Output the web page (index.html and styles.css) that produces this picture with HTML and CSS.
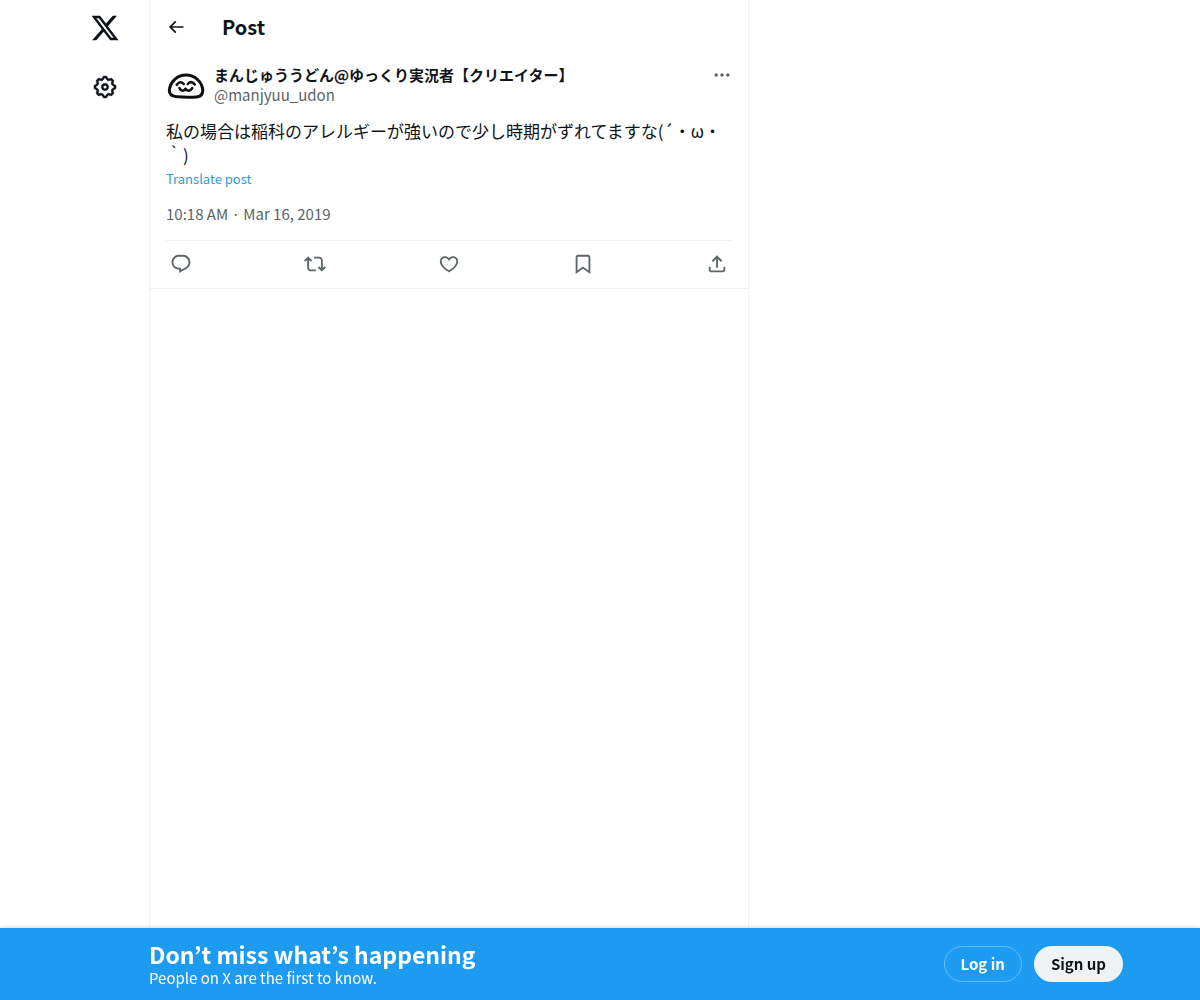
FILE: index.html
```html
<!DOCTYPE html>
<html lang="en">
<head>
<meta charset="utf-8">
<meta name="viewport" content="width=device-width, initial-scale=1">
<title>Post / X</title>
<link rel="stylesheet" href="styles.css">
</head>
<body>
<div class="page">
  <nav class="sidebar" aria-label="Primary">
    <a class="nav-link" href="#" aria-label="X"><svg class="logo" viewBox="0 0 24 24"><path d="M18.244 2.25h3.308l-7.227 8.26 8.502 11.24H16.17l-5.214-6.817L4.99 21.75H1.68l7.73-8.835L1.254 2.25H8.08l4.713 6.231zm-1.161 17.52h1.833L7.084 4.126H5.117z"/></svg></a>
    <a class="nav-link" href="#" aria-label="Settings"><svg class="gear" viewBox="0 0 24 24"><path d="M10.54 1.75h2.92l1.57 2.36c.11.17.32.25.53.21l2.53-.59 2.17 2.17-.58 2.54c-.05.2.04.41.21.53l2.36 1.57v2.92l-2.36 1.57c-.17.12-.26.33-.21.53l.58 2.54-2.17 2.17-2.53-.59c-.21-.04-.42.04-.53.21l-1.57 2.36h-2.92l-1.58-2.36c-.11-.17-.32-.25-.52-.21l-2.54.59-2.17-2.17.58-2.54c.05-.2-.03-.41-.21-.53l-2.35-1.57v-2.92L4.1 8.97c.18-.12.26-.33.21-.53L3.73 5.9 5.9 3.73l2.54.59c.2.04.41-.04.52-.21l1.58-2.36zm1.07 2l-.98 1.47C10.05 6.08 9 6.5 7.99 6.27l-1.46-.34-.6.6.33 1.46c.24 1.01-.18 2.07-1.05 2.64l-1.46.98v.78l1.46.98c.87.57 1.29 1.63 1.05 2.64l-.33 1.46.6.6 1.46-.34c1.01-.23 2.06.19 2.64 1.05l.98 1.47h.78l.97-1.47c.58-.86 1.63-1.28 2.65-1.05l1.45.34.61-.6-.34-1.46c-.23-1.01.18-2.07 1.05-2.64l1.47-.98v-.78l-1.47-.98c-.87-.57-1.28-1.63-1.05-2.64l.34-1.46-.61-.6-1.45.34c-1.02.23-2.07-.19-2.65-1.05l-.97-1.47h-.78zM12 10.5c-.83 0-1.5.67-1.5 1.5s.67 1.5 1.5 1.5c.82 0 1.5-.67 1.5-1.5s-.68-1.5-1.5-1.5zM8.5 12c0-1.93 1.56-3.5 3.5-3.5 1.93 0 3.5 1.57 3.5 3.5s-1.57 3.5-3.5 3.5c-1.94 0-3.5-1.57-3.5-3.5z"/></svg></a>
  </nav>

  <main class="column">
    <header class="topbar">
      <button class="icon-button" type="button" aria-label="Back"><svg class="icon-back" viewBox="0 0 24 24"><path d="M7.414 13l5.043 5.04-1.414 1.42L3.586 12l7.457-7.46 1.414 1.42L7.414 11H21v2H7.414z"/></svg></button>
      <h1 class="title">Post</h1>
    </header>

    <article class="post">
      <div class="author">
        <a class="avatar" href="#" aria-label="まんじゅううどん"><svg viewBox="0 0 40 40"><g fill="none" stroke="#0f0f0f" stroke-width="3" stroke-linecap="round" stroke-linejoin="round"><path d="M3.300 25.500C4 17 11 10 20 10S36 17 36.800 25C37 29.500 35 31.600 30.500 32Q20 32.800 9.500 31.500Q3.300 30.500 3.300 25.500Z"/><path stroke-width="2.600" d="M10.800 19.800Q14.200 15 17.800 19M21.800 19Q25.300 15 28.800 19.500M13.500 23.200Q16.500 28 19.500 23.700Q23 28 26.200 23.200"/></g></svg></a>
        <div class="names">
          <a class="name" href="#">まんじゅううどん@ゆっくり実況者【クリエイター】</a>
          <a class="handle" href="#">@manjyuu_udon</a>
        </div>
        <button class="icon-button more" type="button" aria-label="More"><svg class="icon-more" viewBox="0 0 24 24"><path d="M3 12c0-1.100.9-2 2-2s2 .9 2 2-.9 2-2 2-2-.9-2-2zm9 2c1.100 0 2-.9 2-2s-.9-2-2-2-2 .9-2 2 .9 2 2 2zm7 0c1.100 0 2-.9 2-2s-.9-2-2-2-2 .9-2 2 .9 2 2 2z"/></svg></button>
      </div>
      <p class="text" lang="ja">私の場合は稲科のアレルギーが強いので少し時期がずれてますな(´・ω・｀)</p>
      <button class="translate" type="button">Translate post</button>
      <a class="time" href="#"><time datetime="2019-03-16T10:18">10:18 AM · Mar 16, 2019</time></a>
      <div class="actions">
        <button class="icon-button" type="button" aria-label="Reply"><svg class="icon" viewBox="0 0 24 24"><path d="M1.751 10c0-4.420 3.584-8 8.005-8h4.366c4.490 0 8.129 3.640 8.129 8.130 0 2.960-1.607 5.680-4.196 7.110l-8.054 4.460v-3.690h-.067c-4.490.1-8.183-3.510-8.183-8.010zm8.005-6c-3.317 0-6.005 2.690-6.005 6 0 3.370 2.770 6.080 6.138 6.010l.351-.01h1.761v2.300l5.087-2.810c1.951-1.080 3.163-3.130 3.163-5.360 0-3.390-2.744-6.130-6.129-6.130H9.756z"/></svg></button>
        <button class="icon-button" type="button" aria-label="Repost"><svg class="icon" viewBox="0 0 24 24"><path d="M4.500 3.880l4.432 4.140-1.364 1.460L5.500 7.550V16c0 1.100.896 2 2 2H13v2H7.500c-2.209 0-4-1.790-4-4V7.550L1.432 9.480.068 8.020 4.500 3.880zM16.500 6H11V4h5.500c2.209 0 4 1.790 4 4v8.450l2.068-1.930 1.364 1.460-4.432 4.140-4.432-4.140 1.364-1.460 2.068 1.930V8c0-1.100-.896-2-2-2z"/></svg></button>
        <button class="icon-button" type="button" aria-label="Like"><svg class="icon" viewBox="0 0 24 24"><path d="M16.697 5.500c-1.222-.06-2.679.51-3.890 2.160l-.805 1.090-.806-1.090C9.984 6.010 8.526 5.440 7.304 5.500c-1.243.07-2.349.78-2.910 1.910-.552 1.120-.633 2.780.479 4.820 1.074 1.970 3.257 4.270 7.129 6.610 3.870-2.340 6.052-4.640 7.126-6.610 1.111-2.040 1.030-3.700.477-4.820-.561-1.130-1.666-1.840-2.908-1.910zm4.187 7.690c-1.351 2.480-4.001 5.120-8.379 7.670l-.503.300-.504-.300c-4.379-2.550-7.029-5.190-8.382-7.670-1.360-2.500-1.410-4.860-.514-6.670.887-1.790 2.647-2.910 4.601-3.010 1.651-.09 3.368.56 4.798 2.010 1.429-1.450 3.146-2.100 4.796-2.010 1.954.1 3.714 1.220 4.601 3.010.896 1.810.846 4.170-.514 6.670z"/></svg></button>
        <button class="icon-button" type="button" aria-label="Bookmark"><svg class="icon" viewBox="0 0 24 24"><path d="M4 4.500C4 3.120 5.119 2 6.500 2h11C18.881 2 20 3.120 20 4.500v18.440l-8-5.710-8 5.710V4.500zM6.500 4c-.276 0-.5.220-.5.500v14.560l6-4.290 6 4.290V4.500c0-.280-.224-.5-.5-.5h-11z"/></svg></button>
        <button class="icon-button" type="button" aria-label="Share"><svg class="icon" viewBox="0 0 24 24"><path d="M12 2.590l5.700 5.700-1.410 1.420L13 6.410V16h-2V6.410l-3.300 3.300-1.410-1.420L12 2.590zM21 15l-.02 3.510c0 1.380-1.120 2.490-2.500 2.490H5.500C4.110 21 3 19.880 3 18.500V15h2v3.500c0 .280.220.5.500.5h12.980c.280 0 .5-.220.5-.5L19 15h2z"/></svg></button>
      </div>
    </article>
  </main>
</div>

<aside class="banner">
  <div class="pitch">
    <h2 class="pitch-title">Don’t miss what’s happening</h2>
    <p class="pitch-text">People on X are the first to know.</p>
  </div>
  <div class="banner-actions">
    <a class="pill pill-outline" href="#">Log in</a>
    <a class="pill pill-solid" href="#">Sign up</a>
  </div>
</aside>
</body>
</html>
```
FILE: styles.css
```css
* {
  box-sizing: border-box;
}

body {
  margin: 0;
  background: #fff;
  color: #0f1419;
  font: 15px/20px "Noto Sans CJK JP", "Noto Sans", sans-serif;
}

h1, h2, p {
  margin: 0;
}

a {
  color: inherit;
  text-decoration: none;
}

button {
  padding: 0;
  border: 0;
  background: none;
  color: inherit;
  font: inherit;
  cursor: pointer;
}

svg {
  display: block;
  fill: currentColor;
}

.page {
  display: grid;
  grid-template-columns: minmax(72px, 1fr) minmax(0, 600px) minmax(0, 3fr);
  min-height: 100vh;
  padding-right: 4px;
}

.sidebar {
  display: flex;
  flex-direction: column;
  align-items: flex-end;
  gap: 7px;
  padding: 2px 18px 0 0;
}

.nav-link {
  display: grid;
  place-items: center;
  width: 52px;
  height: 52px;
}

.logo {
  width: 30px;
  height: 30px;
}

.gear {
  width: 26px;
  height: 26px;
  stroke: currentColor;
  stroke-linejoin: round;
}

.gear path {
  stroke-width: 0.3;
}

.column {
  border: 1px solid #eff3f4;
  border-width: 0 1px;
}

.topbar {
  display: flex;
  align-items: center;
  gap: 36px;
  height: 54px;
  padding: 0 16px;
}

.icon-button {
  display: grid;
  place-items: center;
}

.icon-back {
  width: 20px;
  height: 20px;
}

.title {
  font-size: 20px;
  line-height: 24px;
}

.post {
  display: flex;
  flex-direction: column;
  align-items: flex-start;
  padding: 11px 16px 0;
  border-bottom: 1px solid #eff3f4;
}

.author {
  display: flex;
  align-items: flex-start;
  gap: 8px;
  width: 100%;
}

.avatar {
  width: 40px;
  height: 40px;
}

.names {
  display: flex;
  flex: 1;
  flex-direction: column;
  min-width: 0;
}

.name {
  font-weight: 700;
}

.handle,
.time,
.more,
.actions {
  color: #5b6467;
}

.more {
  height: 20px;
}

.icon-more {
  width: 20px;
  height: 20px;
}

.text {
  margin-top: 14px;
  font-size: 17px;
  line-height: 24px;
}

.translate {
  color: #2f9cd6;
  font-size: 13px;
  line-height: 24px;
}

.time {
  margin: 13px 0 16px;
}

.actions {
  display: flex;
  align-items: center;
  justify-content: space-between;
  width: 100%;
  height: 48px;
  padding: 0 4px 1px;
  border-top: 1px solid #eff3f4;
}

.icon {
  width: 22px;
  height: 22px;
}

.banner {
  position: fixed;
  right: 0;
  bottom: 0;
  left: 0;
  display: flex;
  align-items: center;
  justify-content: space-between;
  gap: 24px;
  min-height: 72px;
  padding: 12px 77px 12px 149px;
  background: #1d9bf0;
  box-shadow: 0 0 5px rgba(0, 0, 0, 0.2);
  color: #fff;
}

.pitch-title {
  font-size: 23px;
  line-height: 28px;
}

.banner-actions {
  display: flex;
  gap: 12px;
}

.pill {
  padding: 0 16px;
  border: 1px solid transparent;
  border-radius: 18px;
  font-weight: 700;
  line-height: 34px;
  white-space: nowrap;
}

.pill-outline {
  border-color: #67bcf6;
}

.pill-solid {
  background: #eff3f4;
  color: #0f1419;
}
```
